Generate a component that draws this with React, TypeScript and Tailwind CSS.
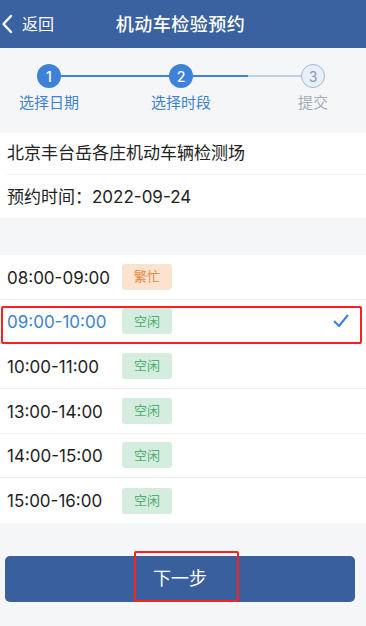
import React, { useState } from 'react';

const slots = [
  { time: '08:00-09:00', busy: true },
  { time: '09:00-10:00', busy: false },
  { time: '10:00-11:00', busy: false },
  { time: '13:00-14:00', busy: false },
  { time: '14:00-15:00', busy: false },
  { time: '15:00-16:00', busy: false },
];

const steps = [
  { n: 1, label: '选择日期', done: true },
  { n: 2, label: '选择时段', done: true },
  { n: 3, label: '提交', done: false },
];

export default function App() {
  const [selected, setSelected] = useState(1);

  return (
    <div
      className="w-[366px] h-[626px] bg-[#f5f6f8] flex flex-col overflow-hidden"
      style={{ fontFamily: 'Inter, "Noto Sans CJK SC", sans-serif' }}
    >
      {/* header */}
      <div className="h-[48px] bg-[#3b62a0] flex items-center relative shrink-0">
        <div className="flex items-center pl-[1px] text-white">
          <svg width="14" height="20" viewBox="0 0 14 20" fill="none">
            <path d="M10 2 L2.5 10 L10 18" stroke="white" strokeWidth="2.4" strokeLinecap="round" strokeLinejoin="round" />
          </svg>
          <span className="ml-[7px] text-[16px] leading-none">返回</span>
        </div>
        <div className="absolute inset-0 flex items-center justify-center pointer-events-none">
          <span className="mr-[5px] text-white text-[18px] font-medium tracking-[0.5px]">机动车检验预约</span>
        </div>
      </div>

      {/* steps */}
      <div className="h-[84px] shrink-0 relative pt-[16px]">
        <div className="absolute left-[49px] top-[27px] w-[199px] h-[1.5px] bg-[#3d82d8]" />
        <div className="absolute left-[248px] top-[27px] w-[65px] h-[1.5px] bg-[#bcd3ea]" />
        <div className="flex gap-[34px] relative">
          {steps.map((s) => (
            <div key={s.n} className="w-[98px] flex flex-col items-center">
              {s.done ? (
                <div className="w-[24px] h-[24px] rounded-full bg-[#3d82d8] text-white text-[14px] font-medium flex items-center justify-center">
                  {s.n}
                </div>
              ) : (
                <div className="w-[24px] h-[24px] rounded-full bg-[#e8f0fb] border border-[#a5b6ca] text-[#8a9ab0] text-[14px] flex items-center justify-center">
                  {s.n}
                </div>
              )}
              <span className={`mt-[5px] text-[15px] leading-[20px] ${s.done ? 'text-[#3d82d0]' : 'text-[#a3abb6]'}`}>
                {s.label}
              </span>
            </div>
          ))}
        </div>
      </div>

      {/* station info */}
      <div className="bg-white shrink-0 mt-[1px]">
        <div className="ml-[7px] h-[42px] flex items-center border-b border-[#eceef1] text-[17px] text-[#222]">
          北京丰台岳各庄机动车辆检测场
        </div>
        <div className="ml-[7px] h-[43px] pt-[3px] flex items-center text-[17px] text-[#222]">
          预约时间：2022-09-24
        </div>
      </div>

      {/* time slots */}
      <div className="bg-white mt-[37px] shrink-0">
        {slots.map((s, i) => (
          <div
            key={s.time}
            onClick={() => setSelected(i)}
            className="h-[44.67px] pl-[7px] relative flex items-center border-b border-[#eceef1] last:border-b-0"
          >
            <span className={`w-[115px] pt-[3px] text-[17px] ${selected === i ? 'text-[#3d82d0]' : 'text-[#1e1e1e]'}`}>{s.time}</span>
            <span
              className={`w-[50px] h-[26px] rounded-[3px] flex items-center justify-center text-[13px] ${
                s.busy ? 'bg-[#fbe3cf] text-[#e2883e]' : 'bg-[#d5eddf] text-[#4fae73]'
              }`}
            >
              {s.busy ? '繁忙' : '空闲'}
            </span>
            {selected === i && (
              <>
                <svg className="ml-auto mr-[17px]" width="16" height="14" viewBox="0 0 16 14" fill="none">
                  <path d="M1.5 7.5 L6 12 L14.5 1.5" stroke="#3d7fe0" strokeWidth="2" strokeLinecap="round" strokeLinejoin="round" />
                </svg>
                <div className="absolute left-[1px] top-[6px] w-[361px] h-[38px] border-[2.5px] border-[#ff1f1f] rounded-[2px] pointer-events-none" />
              </>
            )}
          </div>
        ))}
      </div>

      {/* next button */}
      <div className="px-[5px] mt-[33px] mr-[6px]">
        <button className="w-full h-[46px] rounded-[5px] bg-[#3a5f9d] text-white text-[18px] flex items-center justify-center relative">
          <span>下一步</span>
          <div className="absolute left-[129px] top-[-5px] w-[105px] h-[51px] border-[2.5px] border-[#ff1f1f] rounded-[2px]" />
        </button>
      </div>
    </div>
  );
}
